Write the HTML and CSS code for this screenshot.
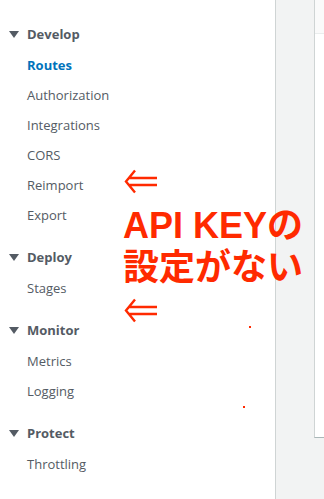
FILE: index.html
```html
<!DOCTYPE html>
<html lang="ja">
<head>
    <meta charset="UTF-8">
    <meta name="viewport" content="width=device-width, initial-scale=1.0">
    <title>API Gateway</title>
    <link rel="stylesheet" href="styles.css">
</head>
<body>

    <nav class="sidebar">

        <section class="nav-group">
            <div class="nav-title">Develop</div>
            <a class="nav-item active">Routes</a>
            <a class="nav-item">Authorization</a>
            <a class="nav-item">Integrations</a>
            <a class="nav-item">CORS</a>
            <a class="nav-item">Reimport</a>
            <a class="nav-item">Export</a>
        </section>

        <section class="nav-group">
            <div class="nav-title">Deploy</div>
            <a class="nav-item">Stages</a>
        </section>

        <section class="nav-group">
            <div class="nav-title">Monitor</div>
            <a class="nav-item">Metrics</a>
            <a class="nav-item">Logging</a>
        </section>

        <section class="nav-group">
            <div class="nav-title">Protect</div>
            <a class="nav-item">Throttling</a>
        </section>

    </nav>

    <div class="gutter"></div>

    <main class="panel">
        <div class="panel-head"></div>
    </main>

    <!-- annotation drawn on top of the screenshot -->
    <svg class="note-arrow arrow-one" width="33" height="25" viewBox="0 0 33 25">
        <path d="M11 1.5 L2 12.5 L11 23.5 M5 9 H33 M5 16 H33" fill="none" stroke="#ff2a00" stroke-width="2.4"/>
    </svg>

    <p class="note-text">API KEYの<br>設定がない</p>

    <svg class="note-arrow arrow-two" width="33" height="25" viewBox="0 0 33 25">
        <path d="M11 1.5 L2 12.5 L11 23.5 M5 9 H33 M5 16 H33" fill="none" stroke="#ff2a00" stroke-width="2.4"/>
    </svg>

    <span class="note-dot dot-one"></span>
    <span class="note-dot dot-two"></span>

</body>
</html>
```

FILE: styles.css
```css
* {
    box-sizing: border-box;
}

:root {
    --texto: #545b64;
    --activo: #0073bb;
    --borde: #d5dbdb;
    --fondo: #f2f3f3;
    --nota: #ff2a00;
}

body {
    margin: 0;
    height: 100vh;
    display: flex;
    font-family: "Open Sans", "Liberation Sans", sans-serif;
    background-color: var(--fondo);
    overflow: hidden;
}

.sidebar {
    width: 276px;
    flex-shrink: 0;
    background-color: white;
    border-right: 1px solid #cfd4d4;
    padding-top: 18px;
}

.nav-group + .nav-group {
    margin-top: 11px;
}

.nav-title {
    height: 32px;
    display: flex;
    align-items: center;
    gap: 8px;
    padding-left: 9px;
    font-size: 13px;
    font-weight: 700;
    color: var(--texto);
}

.nav-title::before {
    content: "";
    border-left: 5px solid transparent;
    border-right: 5px solid transparent;
    border-top: 7px solid var(--texto);
}

.nav-item {
    display: flex;
    align-items: center;
    height: 30px;
    padding-left: 27px;
    font-size: 13px;
    color: var(--texto);
}

.nav-item.active {
    color: var(--activo);
    font-weight: 700;
}

.gutter {
    width: 38px;
    flex-shrink: 0;
}

.panel {
    flex: 1;
    height: 438px;
    background-color: white;
    border-left: 1px solid #cfd4d4;
    border-bottom: 1px solid #aab7b8;
}

.panel-head {
    height: 34px;
    background-color: #fafafa;
    border-bottom: 1px solid #eaeded;
}

.note-arrow {
    position: absolute;
    left: 124px;
}

.arrow-one {
    top: 169px;
}

.arrow-two {
    top: 298px;
}

.note-text {
    position: absolute;
    left: 123px;
    top: 205px;
    margin: 0;
    font-family: "Liberation Sans", "Noto Sans CJK JP", sans-serif;
    font-size: 36px;
    font-weight: 700;
    line-height: 42px;
    color: var(--nota);
    white-space: nowrap;
}

.note-dot {
    position: absolute;
    width: 2px;
    height: 2px;
    background-color: var(--nota);
}

.dot-one {
    left: 249px;
    top: 326px;
}

.dot-two {
    left: 243px;
    top: 406px;
}
```
